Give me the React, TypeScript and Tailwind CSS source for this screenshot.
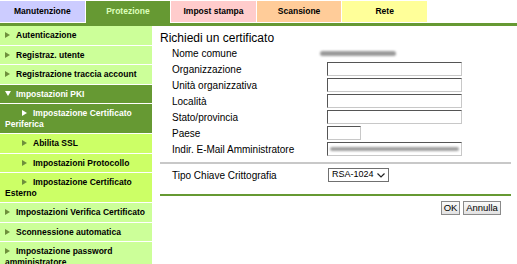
import React from 'react';

type NavItem = {
  label: string;
  sub?: boolean;
  tone: 'light' | 'dark' | 'lime';
  open?: boolean;
};

const TABS = [
  { label: 'Manutenzione', cls: 'bg-[#ccccff] text-black h-[21px]' },
  { label: 'Protezione', cls: 'bg-[#669933] text-[#ddffbb] h-[22px]' },
  { label: 'Impost stampa', cls: 'bg-[#ffcccc] text-black h-[21px]' },
  { label: 'Scansione', cls: 'bg-[#ffcc99] text-black h-[21px]' },
  { label: 'Rete', cls: 'bg-[#ffff99] text-black h-[21px]' },
];

const NAV: NavItem[] = [
  { label: 'Autenticazione', tone: 'light' },
  { label: 'Registraz. utente', tone: 'light' },
  { label: 'Registrazione traccia account', tone: 'light' },
  { label: 'Impostazioni PKI', tone: 'dark', open: true },
  { label: 'Impostazione Certificato Periferica', tone: 'dark', sub: true },
  { label: 'Abilita SSL', tone: 'lime', sub: true },
  { label: 'Impostazioni Protocollo', tone: 'lime', sub: true },
  { label: 'Impostazione Certificato Esterno', tone: 'lime', sub: true },
  { label: 'Impostazioni Verifica Certificato', tone: 'light' },
  { label: 'Sconnessione automatica', tone: 'light' },
  { label: 'Impostazione password amministratore', tone: 'light' },
];

const TONES = {
  light: 'bg-[#ccff99] text-black',
  dark: 'bg-[#669933] text-white',
  lime: 'bg-[#ccff66] text-black',
};

function Arrow({ open, color }: { open?: boolean; color: string }) {
  return open ? (
    <svg width="6" height="5" viewBox="0 0 6 5" className="inline-block mr-[5px] align-[1px]">
      <polygon points="0,0 6,0 3,5" fill={color} />
    </svg>
  ) : (
    <svg width="5" height="6" viewBox="0 0 5 6" className="inline-block mr-[6px] align-[0px]">
      <polygon points="0,0 5,3 0,6" fill={color} />
    </svg>
  );
}

function TextField({ w = 'w-[135px]', blurred }: { w?: string; blurred?: boolean }) {
  return (
    <div
      className={`${w} h-[14px] bg-white border border-t-[#555] border-l-[#555] border-r-[#c8c8c8] border-b-[#c8c8c8] flex items-center px-[2px] overflow-hidden`}
    >
      {blurred && <div className="w-full h-[4px] bg-[#a0a0a0] rounded-full blur-[1px]" />}
    </div>
  );
}

const FIELDS = [
  { label: 'Organizzazione' },
  { label: 'Unità organizzativa' },
  { label: 'Località' },
  { label: 'Stato/provincia' },
  { label: 'Paese', w: 'w-[34px]' },
  { label: 'Indir. E-Mail Amministratore', blurred: true },
];

export default function App() {
  return (
    <div className="w-[517px] h-[264px] overflow-hidden bg-white font-['Liberation_Sans',Arial,sans-serif]">
      {/* tabs */}
      <div className="flex items-start gap-px pt-px w-[427px] h-[23px]">
        {TABS.map((t) => (
          <div
            key={t.label}
            className={`flex-1 flex items-center justify-center pb-[1px] text-[8.5px] font-bold ${t.cls}`}
          >
            {t.label}
          </div>
        ))}
      </div>
      <div className="h-[3px] bg-[#669933]" />

      <div className="flex">
        {/* side nav */}
        <div className="w-[152px] shrink-0">
          {NAV.map((n) => (
            <div
              key={n.label}
              className={`pl-[5px] pr-[2px] py-[4px] border-b border-white text-[8.5px] leading-[10.5px] font-bold ${TONES[n.tone]}`}
            >
              {n.sub && <span className="inline-block w-[17px]" />}
              <Arrow open={n.open} color={n.tone === 'dark' ? '#ffffff' : '#6e8f3c'} />
              {n.label}
            </div>
          ))}
        </div>

        {/* main form */}
        <div className="flex-1 pl-[8px] pr-[6px] pt-[5px] text-black">
          <div className="text-[12px] leading-[14px]">Richiedi un certificato</div>

          <div className="flex items-center h-[16px] text-[10px]">
            <div className="w-[160px] pl-[12px]">Nome comune</div>
            <div className="w-[76px] h-[5px] bg-[#9a9a9a] rounded-full blur-[1px]" />
          </div>

          {FIELDS.map((f) => (
            <div key={f.label} className="flex items-center h-[16px] text-[10px]">
              <div className="w-[167px] pl-[12px]">{f.label}</div>
              <TextField w={f.w} blurred={f.blurred} />
            </div>
          ))}

          <div className="mt-[5px] h-[2px] bg-[#c8c8c8]" />

          <div className="flex items-center h-[22px] text-[10px]">
            <div className="w-[168px] pl-[12px]">Tipo Chiave Crittografia</div>
            <div className="flex items-center justify-between h-[14px] w-[61px] border border-[#707070] bg-white pl-[3px] pr-[3px] text-[9px] whitespace-nowrap">
              <span>RSA-1024</span>
              <svg width="8" height="5" viewBox="0 0 8 5" className="shrink-0">
                <polyline points="0.5,0.5 4,4 7.5,0.5" fill="none" stroke="#222" strokeWidth="1.2" />
              </svg>
            </div>
          </div>

          <div className="mt-[8px] h-[2px] bg-[#669933]" />

          <div className="flex justify-end gap-[3px] mt-[5px] pr-[10px] text-[9.5px]">
            <button className="h-[14px] w-[19px] border border-[#8a8a8a] bg-gradient-to-b from-[#fafafa] to-[#e2e2e2] leading-none">
              OK
            </button>
            <button className="h-[14px] w-[38px] border border-[#8a8a8a] bg-gradient-to-b from-[#fafafa] to-[#e2e2e2] leading-none">
              Annulla
            </button>
          </div>
        </div>
      </div>
    </div>
  );
}
